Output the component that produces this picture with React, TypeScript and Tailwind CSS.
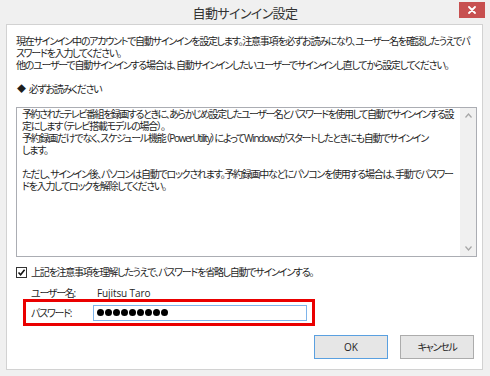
import React from "react";

const jp = "[font-family:'Open_Sans','Noto_Sans_CJK_JP',sans-serif] [font-feature-settings:'palt']";
const t = "text-[10px] leading-[12px] tracking-[-1.25px] whitespace-nowrap";

function Dots() {
  return (
    <div className="flex items-center gap-[1px]">
      {Array.from({ length: 9 }).map((_, i) => (
        <span key={i} className="inline-block w-[7px] h-[7px] rounded-full bg-black" />
      ))}
    </div>
  );
}

export default function App() {
  return (
    <div className={`w-[490px] h-[376px] bg-[#f0f0f0] flex flex-col text-[#1e1e1e] ${jp}`}>
      <div className="relative h-[24px] flex items-center justify-center">
        <span className="text-[13px] text-[#333] tracking-[-0.6px] leading-none mt-[3px]">自動サインイン設定</span>
        <div className="absolute right-[5px] top-[2px] w-[26px] h-[16px] bg-[#c75050] flex items-center justify-center">
          <svg width="8" height="8" viewBox="0 0 8 8">
            <path d="M1 1 L7 7 M7 1 L1 7" stroke="white" strokeWidth="1.8" strokeLinecap="round" />
          </svg>
        </div>
      </div>

      <div className="ml-[6px] mr-[7px] mb-[6px] flex-1 bg-white border border-[#d2d2d2] flex flex-col pl-[9px] pr-[6px] pt-[10px] overflow-hidden">
        <div className={t}>
          <div>現在サインイン中のアカウントで自動サインインを設定します。注意事項を必ずお読みになり、ユーザー名を確認したうえでパ</div>
          <div>スワードを入力してください。</div>
          <div>他のユーザーで自動サインインする場合は、自動サインインしたいユーザーでサインインし直してから設定してください。</div>
        </div>

        <div className={`mt-[12px] flex items-center ${t}`}>
          <span className="text-[9px] mr-[4px] ml-[1px]">◆</span>
          <span>必ずお読みください</span>
        </div>

        <div className="mt-[12px] h-[150px] w-[461px] border border-[#abadb3] flex">
          <div className={`flex-1 pl-[5px] overflow-hidden ${t}`}>
            <div className="tracking-[-1.45px]">予約されたテレビ番組を録画するときに、あらかじめ設定したユーザー名とパスワードを使用して自動でサインインする設</div>
            <div>定にします（テレビ搭載モデルの場合）。</div>
            <div>予約録画だけでなく、スケジュール機能（PowerUtility）によってWindowsがスタートしたときにも自動でサインイン</div>
            <div>します。</div>
            <div>&nbsp;</div>
            <div>ただし、サインイン後、パソコンは自動でロックされます。予約録画中などにパソコンを使用する場合は、手動でパスワー</div>
            <div>ドを入力してロックを解除してください。</div>
          </div>
          <div className="w-[16px] bg-[#f0f0f0] flex flex-col justify-between items-center py-[5px]">
            <svg width="7" height="5" viewBox="0 0 7 5">
              <path d="M0.5 4.5 L3.5 1 L6.5 4.5" stroke="#a6a6a6" strokeWidth="1.2" fill="none" />
            </svg>
            <svg width="7" height="5" viewBox="0 0 7 5">
              <path d="M0.5 0.5 L3.5 4 L6.5 0.5" stroke="#a6a6a6" strokeWidth="1.2" fill="none" />
            </svg>
          </div>
        </div>

        <div className={`mt-[9px] flex items-center ${t}`}>
          <div className="w-[11px] h-[11px] border border-[#333] bg-white flex items-center justify-center mr-[4px]">
            <svg width="9" height="9" viewBox="0 0 9 9">
              <path d="M1.5 4.5 L3.6 6.7 L7.6 1.8" stroke="#111" strokeWidth="1.6" fill="none" />
            </svg>
          </div>
          <span>上記を注意事項を理解したうえで、パスワードを省略し自動でサインインする。</span>
        </div>

        <div className="mt-[9px] flex items-center text-[10px] leading-[12px] whitespace-nowrap pl-[15px]">
          <span className="w-[66px] tracking-[-1.25px]">ユーザー名:</span>
          <span className="tracking-[-0.1px]">Fujitsu Taro</span>
        </div>

        <div className="mt-[0px] ml-[7px] w-[292px] h-[27px] border-[3px] border-[#ea0000] flex items-center pl-[5px]">
          <span className="w-[62px] text-[10px] leading-[12px] tracking-[-1.25px] whitespace-nowrap">パスワード:</span>
          <div className="w-[214px] h-[16px] border border-[#7eb4ea] bg-white flex items-center pl-[3px]">
            <Dots />
          </div>
        </div>

        <div className="mt-[9px] flex justify-end gap-[12px] pr-[2px]">
          <div className="w-[74px] h-[24px] border border-[#5aa0e0] bg-[#e6e6e6] flex items-center justify-center text-[10px]">
            OK
          </div>
          <div className="w-[74px] h-[24px] border border-[#acacac] bg-[#e6e6e6] flex items-center justify-center text-[10px] tracking-[-1.25px]">
            キャンセル
          </div>
        </div>
      </div>
    </div>
  );
}
